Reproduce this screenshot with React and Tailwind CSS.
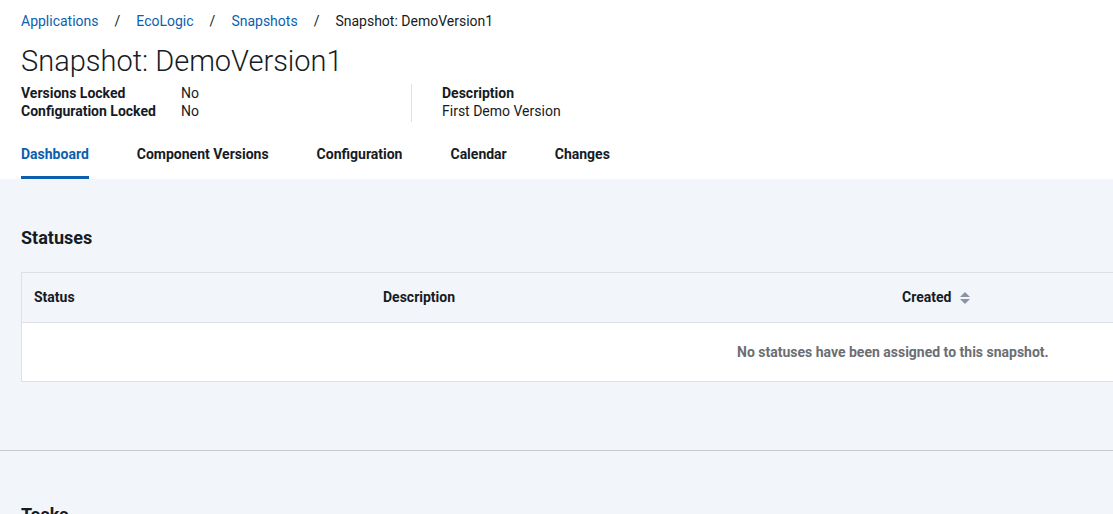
const tabs = ['Dashboard', 'Component Versions', 'Configuration', 'Calendar', 'Changes'];

function SortIcon() {
  return (
    <svg width="12" height="14" viewBox="0 0 12 14" className="ml-2">
      <path d="M6 1 L11 6 H1 Z" fill="#8a94a3" />
      <path d="M6 13 L11 8 H1 Z" fill="#8a94a3" />
    </svg>
  );
}

export default function App() {
  return (
    <div className="w-[1113px] h-[514px] overflow-hidden bg-white text-[#161b24]" style={{ fontFamily: 'Roboto, "Liberation Sans", sans-serif' }}>
      {/* Header */}
      <div className="px-[21px]">
        <nav className="flex items-center h-[42px] text-[14px]">
          <a className="text-[#0b5fae]">Applications</a>
          <span className="mx-[16px]">/</span>
          <a className="text-[#0b5fae]">EcoLogic</a>
          <span className="mx-[16px]">/</span>
          <a className="text-[#0b5fae]">Snapshots</a>
          <span className="mx-[16px]">/</span>
          <span>Snapshot: DemoVersion1</span>
        </nav>
        <h1 className="text-[29px] font-light leading-[38px]">Snapshot: DemoVersion1</h1>
        <div className="flex mt-[4px] text-[14px] leading-[18px]">
          <div className="w-[390px]">
            <div className="flex"><span className="w-[160px] font-bold">Versions Locked</span><span>No</span></div>
            <div className="flex"><span className="w-[160px] font-bold">Configuration Locked</span><span>No</span></div>
          </div>
          <div className="border-l border-[#dcdfe4] pl-[30px] h-[38px]">
            <div className="font-bold">Description</div>
            <div>First Demo Version</div>
          </div>
        </div>
        <div className="flex gap-[48px] mt-[8px] text-[14px] font-bold">
          {tabs.map((t, i) => (
            <div
              key={t}
              className={`h-[49px] pt-[2px] flex items-center border-b-[3px] ${
                i === 0 ? 'text-[#0b5fae] border-[#0b5fae]' : 'border-transparent'
              }`}
            >
              {t}
            </div>
          ))}
        </div>
      </div>

      {/* Body */}
      <div className="bg-[#f2f5f9]">
        <div className="px-[21px] pt-[47px] pb-[68px] border-b border-[#c9cbce]">
          <h2 className="text-[18px] font-bold leading-[24px]">Statuses</h2>
          <div className="mt-[22px] w-[1800px] border border-[#dde1e6] text-[14px]">
            <div className="flex items-center h-[50px] font-bold border-b border-[#dde1e6]">
              <div className="w-[361px] pl-[12px]">Status</div>
              <div className="w-[519px]">Description</div>
              <div className="flex items-center">Created<SortIcon /></div>
            </div>
            <div className="h-[58px] bg-white flex items-center">
              <div className="pl-[715px] font-bold text-[#6b6e73]">No statuses have been assigned to this snapshot.</div>
            </div>
          </div>
        </div>
        <div className="px-[21px] pt-[52px]">
          <h2 className="text-[18px] font-bold leading-[24px]">Tasks</h2>
        </div>
      </div>
    </div>
  );
}
